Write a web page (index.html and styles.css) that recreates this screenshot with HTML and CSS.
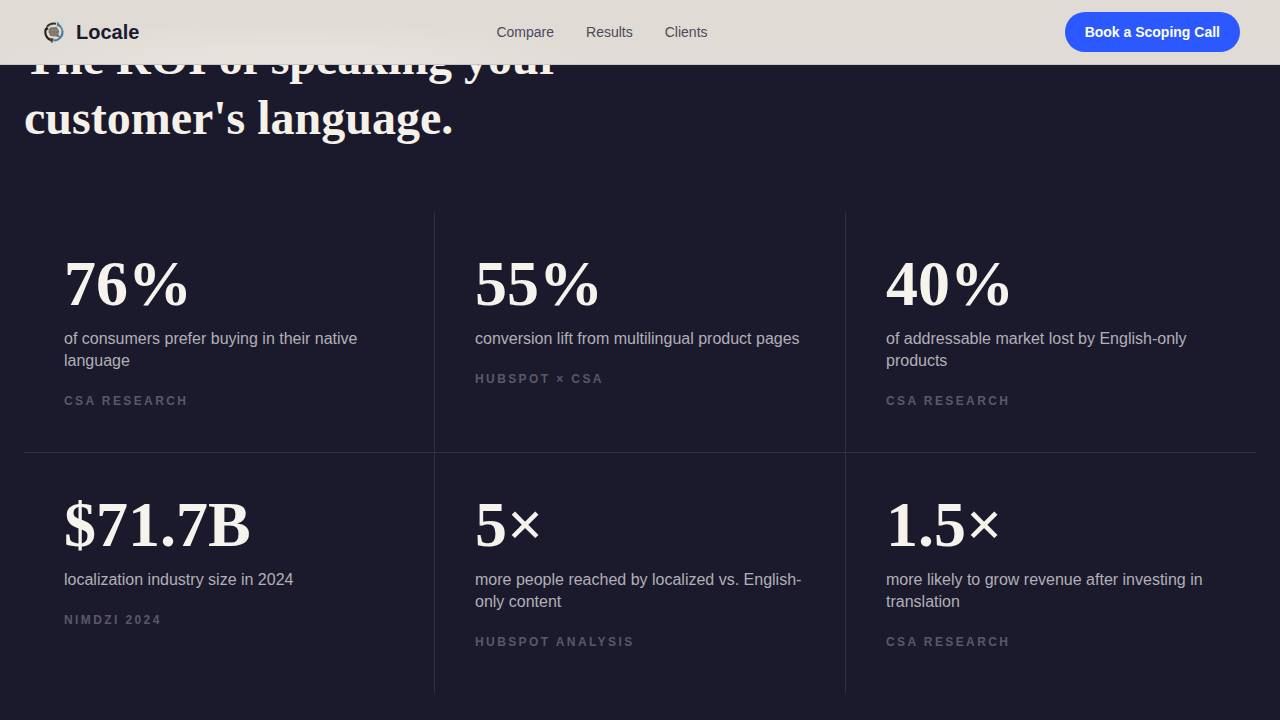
FILE: index.html
```html
<!DOCTYPE html>
<html lang="en">
<head>
  <meta charset="UTF-8">
  <meta name="viewport" content="width=device-width, initial-scale=1.0">
  <title>Locale</title>
  <link rel="stylesheet" href="styles.css">
</head>
<body>

  <header class="site-header">
    <a class="brand" href="#">
      <svg class="brand-icon" viewBox="0 0 28 28" fill="none" aria-hidden="true">
        <path d="M12 22.4A8.6 8.6 0 0 1 6.2 10.2" stroke="#24221f" stroke-width="2"/>
        <path d="M7 8.6A8.6 8.6 0 0 1 16 5.8" stroke="#35322d" stroke-width="2"/>
        <path d="M17 6.2A8.6 8.6 0 0 1 22.4 13" stroke="#5f8ea4" stroke-width="2"/>
        <path d="M22.5 13A8.6 8.6 0 0 1 13.4 22.5" stroke="#437da6" stroke-width="2"/>
        <path d="M17.4 3.4l4 5.4-4.6-.6z" fill="#4f7d94"/>
        <path d="M12 25.4l-3.4-5.6 5.2.6z" fill="#4b4740"/>
        <path d="M4.4 12.6l2.4-4.4 2 3.4z" fill="#24221f"/>
        <path d="M9.8 9.6l6.8-.6 2.6 4-.8 3.4 2.6 3.6-4.8-1.6-5.8-.4-2-4z" fill="#7a7367"/>
        <path d="M9.6 12.4h8.8M9.6 15.6h9.2M12.4 9.8v8M15.8 9.6v8.4" stroke="#99938a" stroke-width=".5"/>
      </svg>
      <span>Locale</span>
    </a>
    <nav class="nav-links">
      <a href="#compare">Compare</a>
      <a href="#results">Results</a>
      <a href="#clients">Clients</a>
    </nav>
    <button class="cta" type="button">Book a Scoping Call</button>
  </header>

  <main class="roi" id="results">
    <h2 class="roi-title">The ROI of speaking your customer's language.</h2>

    <div class="stats">
      <div class="stat">
        <div class="stat-value">76%</div>
        <p class="stat-text">of consumers prefer buying in their native language</p>
        <p class="stat-source">CSA Research</p>
      </div>
      <div class="stat">
        <div class="stat-value">55%</div>
        <p class="stat-text">conversion lift from multilingual product pages</p>
        <p class="stat-source">HubSpot × CSA</p>
      </div>
      <div class="stat">
        <div class="stat-value">40%</div>
        <p class="stat-text">of addressable market lost by English-only products</p>
        <p class="stat-source">CSA Research</p>
      </div>
      <div class="stat">
        <div class="stat-value">$71.7B</div>
        <p class="stat-text">localization industry size in 2024</p>
        <p class="stat-source">Nimdzi 2024</p>
      </div>
      <div class="stat">
        <div class="stat-value">5×</div>
        <p class="stat-text">more people reached by localized vs. English-only content</p>
        <p class="stat-source">HubSpot Analysis</p>
      </div>
      <div class="stat">
        <div class="stat-value">1.5×</div>
        <p class="stat-text">more likely to grow revenue after investing in translation</p>
        <p class="stat-source">CSA Research</p>
      </div>
    </div>
  </main>

</body>
</html>
```

FILE: styles.css
```css
* {
  box-sizing: border-box;
}
body {
  margin: 0;
  background: #1b1a2d;
  color: #f5f0e8;
  font-family: "Liberation Sans", Arial, sans-serif;
}
h2, p {
  margin: 0;
}

/* Header */
.site-header {
  position: fixed;
  top: 0;
  left: 0;
  right: 0;
  z-index: 10;
  display: flex;
  justify-content: space-between;
  align-items: center;
  padding: 12px 40px;
  /* soft glow along the bottom left, over the flat bar colour */
  background:
    radial-gradient(ellipse 320px 44px at 290px 100%, #e7e3dc, #e6e2db 40%, transparent) no-repeat,
    #e0dbd5;
  border-bottom: 1px solid #c9c4c5;
}
.brand {
  display: flex;
  align-items: center;
  gap: 8px;
  color: #1a1a2e;
  font-size: 20px;
  font-weight: bold;
  text-decoration: none;
}
.brand-icon {
  width: 28px;
  height: 28px;
}
.nav-links {
  display: flex;
  gap: 32px;
}
.nav-links a {
  color: #4a4a5a;
  font-size: 14px;
  text-decoration: none;
}
.cta {
  height: 40px;
  padding: 0 20px;
  border: none;
  border-radius: 20px;
  background: #2b59ff;
  color: #fff;
  font-family: inherit;
  font-size: 14px;
  font-weight: bold;
  cursor: pointer;
}

/* ROI section */
.roi {
  padding: 28px 24px;
}
.roi-title {
  max-width: 640px;
  margin-bottom: 64px;
  font-family: "Liberation Serif", "Times New Roman", serif;
  font-size: 48px;
  line-height: 60px;
}

/* Stats grid, the lines are the gaps between cells */
.stats {
  display: grid;
  grid-template-columns: repeat(3, 1fr);
  gap: 1px;
  background: #32313f;
}
.stat {
  padding: 40px;
  background: #1b1a2d;
}
.stat-value {
  margin-bottom: 12px;
  color: #f5f3eb;
  font-family: "Liberation Serif", "Times New Roman", serif;
  font-size: 64px;
  font-weight: bold;
  line-height: 64px;
}
.stat-text {
  margin-bottom: 18px;
  color: #b2b0b5;
  font-size: 16px;
  line-height: 22px;
}
.stat-source {
  color: #5a5866;
  font-size: 12px;
  font-weight: bold;
  line-height: 22px;
  letter-spacing: 0.2em;
  text-transform: uppercase;
}
```
